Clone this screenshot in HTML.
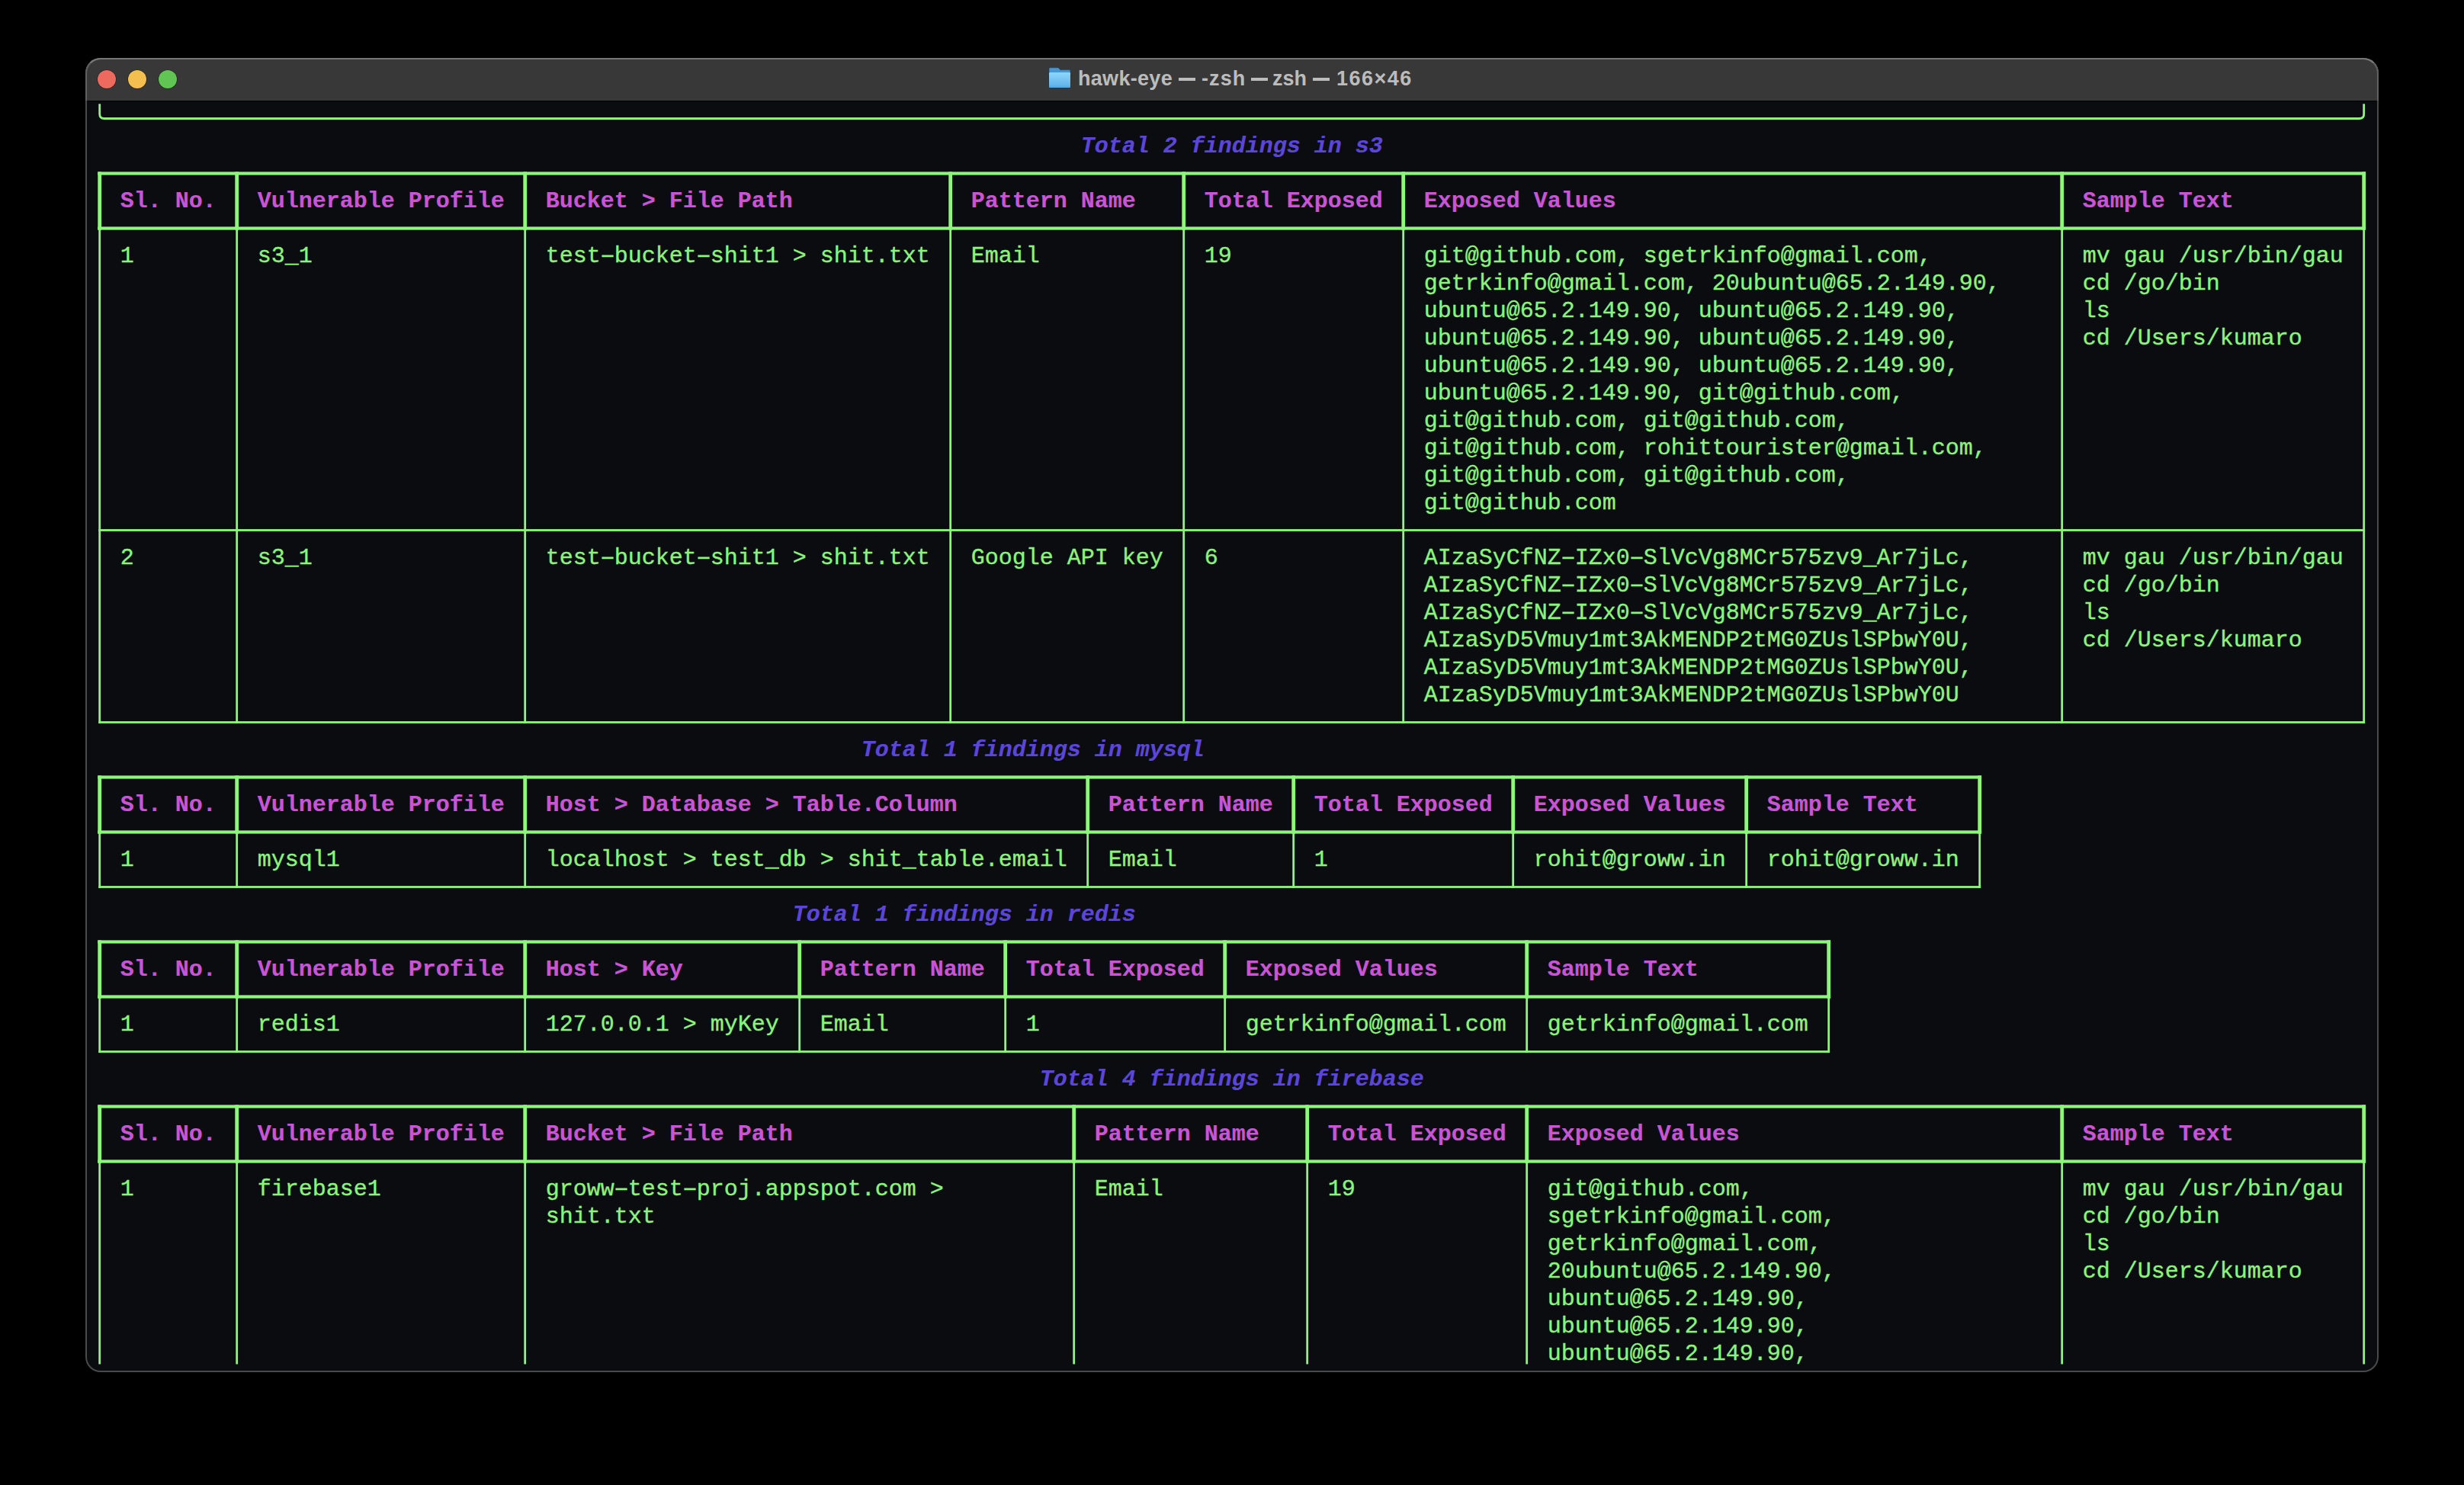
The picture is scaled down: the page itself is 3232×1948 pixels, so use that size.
<!DOCTYPE html>
<html><head><meta charset="utf-8"><style>
html,body{margin:0;padding:0;background:#000;width:3232px;height:1948px;overflow:hidden}
#win{position:absolute;left:112px;top:76px;width:3008px;height:1724px;border-radius:20px;background:#0b0c0f;overflow:hidden;box-sizing:border-box}
#frame{position:absolute;left:112px;top:76px;width:3008px;height:1724px;border-radius:20px;box-sizing:border-box;border:2px solid #4a4a4b;border-top-color:#777;pointer-events:none}
#frame2{position:absolute;left:112px;top:76px;width:3008px;height:56px;border-radius:20px 20px 0 0;box-sizing:border-box;border:2px solid #606060;border-top-color:#777;border-bottom:none;pointer-events:none}
#bar{position:absolute;left:0;top:0;width:100%;height:57px;background:#383838;border-bottom:1px solid #000;box-sizing:border-box}
.dot{position:absolute;top:16px;width:24px;height:24px;border-radius:50%;box-shadow:0 0 0 0.6px rgba(0,0,0,0.45)}
.dash{position:absolute;top:26.299999999999997px;width:22.4px;height:3.4px;background:#bcbcbc}
.ttl{position:absolute;top:-1.5px;height:56px;line-height:56px;font-family:"Liberation Sans",sans-serif;font-weight:bold;font-size:27px;color:#bcbcbc;white-space:pre}
.t{position:absolute;white-space:pre;font-family:"Liberation Mono",monospace;font-size:30px;letter-spacing:-0.0029px;line-height:36.0px;height:36.0px}
.g{color:#8cf47c;-webkit-text-stroke:0.35px #8cf47c}
.h{color:#c955d6;font-weight:bold;-webkit-text-stroke:0.2px #c955d6}
.b{color:#5b46d9;font-weight:bold;font-style:italic;-webkit-text-stroke:0.2px #5b46d9}
svg{position:absolute;left:0;top:0}
.hy{display:inline-block;transform:scaleX(1.75)}
</style></head><body>
<div id="win">
 <div id="bar">
  <div class="dot" style="left:16px;background:#ed6a5e"></div>
  <div class="dot" style="left:56px;background:#f4bf4f"></div>
  <div class="dot" style="left:96px;background:#61c554"></div>
  <svg style="position:absolute;left:1262px;top:11px" width="32" height="30" viewBox="0 0 32 30">
   <defs><linearGradient id="fg" x1="0" y1="0" x2="0" y2="1"><stop offset="0" stop-color="#8ed6fd"/><stop offset="1" stop-color="#5eb1e8"/></linearGradient></defs>
   <path d="M2,3.2 Q2,1.8 3.4,1.8 L13.4,1.8 Q14.4,1.8 15.1,2.6 L16.6,4.6 L28.6,4.6 Q30,4.6 30,6 L30,26.6 Q30,28 28.6,28 L3.4,28 Q2,28 2,26.6 Z" fill="#4596d2" stroke="#173048" stroke-width="0.8" stroke-opacity="0.6"/>
   <rect x="2" y="8" width="28" height="20" rx="1.2" fill="url(#fg)"/>
   <rect x="2" y="25.6" width="28" height="1.6" fill="#55a6df" opacity="0.7"/>
  </svg>
  <div class="ttl" style="left:1302px;letter-spacing:0.3px">hawk-eye</div>
  <div class="dash" style="left:1434px"></div>
  <div class="ttl" style="left:1464px;letter-spacing:1.1px">-zsh</div>
  <div class="dash" style="left:1528.5px"></div>
  <div class="ttl" style="left:1557px">zsh</div>
  <div class="dash" style="left:1610px"></div>
  <div class="ttl" style="left:1641px;letter-spacing:1.46px">166×46</div>
 </div>
</div>
<svg width="3232" height="1948" fill="#8cf77a" style="clip-path:inset(132px 0 0 0)">
<path d="M130.70,136.2 L130.70,149.50 Q130.70,155.50 136.70,155.50 L3094.70,155.50 Q3100.70,155.50 3100.70,149.50 L3100.70,136.2" fill="none" stroke="#8cf77a" stroke-width="2.8"/>
<rect x="128.30" y="225.40" width="2974.80" height="4.2"/>
<rect x="128.30" y="297.40" width="2974.80" height="4.2"/>
<rect x="128.30" y="225.40" width="4.8" height="76.20"/>
<rect x="308.30" y="225.40" width="4.8" height="76.20"/>
<rect x="686.30" y="225.40" width="4.8" height="76.20"/>
<rect x="1244.30" y="225.40" width="4.8" height="76.20"/>
<rect x="1550.30" y="225.40" width="4.8" height="76.20"/>
<rect x="1838.30" y="225.40" width="4.8" height="76.20"/>
<rect x="2702.30" y="225.40" width="4.8" height="76.20"/>
<rect x="3098.30" y="225.40" width="4.8" height="76.20"/>
<rect x="129.30" y="694.10" width="2972.80" height="2.8"/>
<rect x="129.30" y="946.10" width="2972.80" height="2.8"/>
<rect x="129.30" y="299.50" width="2.8" height="649.40"/>
<rect x="309.30" y="299.50" width="2.8" height="649.40"/>
<rect x="687.30" y="299.50" width="2.8" height="649.40"/>
<rect x="1245.30" y="299.50" width="2.8" height="649.40"/>
<rect x="1551.30" y="299.50" width="2.8" height="649.40"/>
<rect x="1839.30" y="299.50" width="2.8" height="649.40"/>
<rect x="2703.30" y="299.50" width="2.8" height="649.40"/>
<rect x="3099.30" y="299.50" width="2.8" height="649.40"/>
<rect x="128.30" y="1017.40" width="2470.80" height="4.2"/>
<rect x="128.30" y="1089.40" width="2470.80" height="4.2"/>
<rect x="128.30" y="1017.40" width="4.8" height="76.20"/>
<rect x="308.30" y="1017.40" width="4.8" height="76.20"/>
<rect x="686.30" y="1017.40" width="4.8" height="76.20"/>
<rect x="1424.30" y="1017.40" width="4.8" height="76.20"/>
<rect x="1694.30" y="1017.40" width="4.8" height="76.20"/>
<rect x="1982.30" y="1017.40" width="4.8" height="76.20"/>
<rect x="2288.30" y="1017.40" width="4.8" height="76.20"/>
<rect x="2594.30" y="1017.40" width="4.8" height="76.20"/>
<rect x="129.30" y="1162.10" width="2468.80" height="2.8"/>
<rect x="129.30" y="1091.50" width="2.8" height="73.40"/>
<rect x="309.30" y="1091.50" width="2.8" height="73.40"/>
<rect x="687.30" y="1091.50" width="2.8" height="73.40"/>
<rect x="1425.30" y="1091.50" width="2.8" height="73.40"/>
<rect x="1695.30" y="1091.50" width="2.8" height="73.40"/>
<rect x="1983.30" y="1091.50" width="2.8" height="73.40"/>
<rect x="2289.30" y="1091.50" width="2.8" height="73.40"/>
<rect x="2595.30" y="1091.50" width="2.8" height="73.40"/>
<rect x="128.30" y="1233.40" width="2272.80" height="4.2"/>
<rect x="128.30" y="1305.40" width="2272.80" height="4.2"/>
<rect x="128.30" y="1233.40" width="4.8" height="76.20"/>
<rect x="308.30" y="1233.40" width="4.8" height="76.20"/>
<rect x="686.30" y="1233.40" width="4.8" height="76.20"/>
<rect x="1046.30" y="1233.40" width="4.8" height="76.20"/>
<rect x="1316.30" y="1233.40" width="4.8" height="76.20"/>
<rect x="1604.30" y="1233.40" width="4.8" height="76.20"/>
<rect x="2000.30" y="1233.40" width="4.8" height="76.20"/>
<rect x="2396.30" y="1233.40" width="4.8" height="76.20"/>
<rect x="129.30" y="1378.10" width="2270.80" height="2.8"/>
<rect x="129.30" y="1307.50" width="2.8" height="73.40"/>
<rect x="309.30" y="1307.50" width="2.8" height="73.40"/>
<rect x="687.30" y="1307.50" width="2.8" height="73.40"/>
<rect x="1047.30" y="1307.50" width="2.8" height="73.40"/>
<rect x="1317.30" y="1307.50" width="2.8" height="73.40"/>
<rect x="1605.30" y="1307.50" width="2.8" height="73.40"/>
<rect x="2001.30" y="1307.50" width="2.8" height="73.40"/>
<rect x="2397.30" y="1307.50" width="2.8" height="73.40"/>
<rect x="128.30" y="1449.40" width="2974.80" height="4.2"/>
<rect x="128.30" y="1521.40" width="2974.80" height="4.2"/>
<rect x="128.30" y="1449.40" width="4.8" height="76.20"/>
<rect x="308.30" y="1449.40" width="4.8" height="76.20"/>
<rect x="686.30" y="1449.40" width="4.8" height="76.20"/>
<rect x="1406.30" y="1449.40" width="4.8" height="76.20"/>
<rect x="1712.30" y="1449.40" width="4.8" height="76.20"/>
<rect x="2000.30" y="1449.40" width="4.8" height="76.20"/>
<rect x="2702.30" y="1449.40" width="4.8" height="76.20"/>
<rect x="3098.30" y="1449.40" width="4.8" height="76.20"/>
<rect x="129.30" y="1523.50" width="2.8" height="266.00"/>
<rect x="309.30" y="1523.50" width="2.8" height="266.00"/>
<rect x="687.30" y="1523.50" width="2.8" height="266.00"/>
<rect x="1407.30" y="1523.50" width="2.8" height="266.00"/>
<rect x="1713.30" y="1523.50" width="2.8" height="266.00"/>
<rect x="2001.30" y="1523.50" width="2.8" height="266.00"/>
<rect x="2703.30" y="1523.50" width="2.8" height="266.00"/>
<rect x="3099.30" y="1523.50" width="2.8" height="266.00"/>
</svg>
<div class="t b" style="left:1417.70px;top:173.50px">Total 2 findings in s3</div>
<div class="t h" style="left:157.70px;top:245.50px">Sl. No.</div>
<div class="t h" style="left:337.70px;top:245.50px">Vulnerable Profile</div>
<div class="t h" style="left:715.70px;top:245.50px">Bucket &gt; File Path</div>
<div class="t h" style="left:1273.70px;top:245.50px">Pattern Name</div>
<div class="t h" style="left:1579.70px;top:245.50px">Total Exposed</div>
<div class="t h" style="left:1867.70px;top:245.50px">Exposed Values</div>
<div class="t h" style="left:2731.70px;top:245.50px">Sample Text</div>
<div class="t g" style="left:157.70px;top:317.50px">1</div>
<div class="t g" style="left:337.70px;top:317.50px">s3_1</div>
<div class="t g" style="left:715.70px;top:317.50px">test<span class=hy>-</span>bucket<span class=hy>-</span>shit1 &gt; shit.txt</div>
<div class="t g" style="left:1273.70px;top:317.50px">Email</div>
<div class="t g" style="left:1579.70px;top:317.50px">19</div>
<div class="t g" style="left:1867.70px;top:317.50px">git@github.com, sgetrkinfo@gmail.com,</div>
<div class="t g" style="left:1867.70px;top:353.50px">getrkinfo@gmail.com, 20ubuntu@65.2.149.90,</div>
<div class="t g" style="left:1867.70px;top:389.50px">ubuntu@65.2.149.90, ubuntu@65.2.149.90,</div>
<div class="t g" style="left:1867.70px;top:425.50px">ubuntu@65.2.149.90, ubuntu@65.2.149.90,</div>
<div class="t g" style="left:1867.70px;top:461.50px">ubuntu@65.2.149.90, ubuntu@65.2.149.90,</div>
<div class="t g" style="left:1867.70px;top:497.50px">ubuntu@65.2.149.90, git@github.com,</div>
<div class="t g" style="left:1867.70px;top:533.50px">git@github.com, git@github.com,</div>
<div class="t g" style="left:1867.70px;top:569.50px">git@github.com, rohittourister@gmail.com,</div>
<div class="t g" style="left:1867.70px;top:605.50px">git@github.com, git@github.com,</div>
<div class="t g" style="left:1867.70px;top:641.50px">git@github.com</div>
<div class="t g" style="left:2731.70px;top:317.50px">mv gau /usr/bin/gau</div>
<div class="t g" style="left:2731.70px;top:353.50px">cd /go/bin</div>
<div class="t g" style="left:2731.70px;top:389.50px">ls</div>
<div class="t g" style="left:2731.70px;top:425.50px">cd /Users/kumaro</div>
<div class="t g" style="left:157.70px;top:713.50px">2</div>
<div class="t g" style="left:337.70px;top:713.50px">s3_1</div>
<div class="t g" style="left:715.70px;top:713.50px">test<span class=hy>-</span>bucket<span class=hy>-</span>shit1 &gt; shit.txt</div>
<div class="t g" style="left:1273.70px;top:713.50px">Google API key</div>
<div class="t g" style="left:1579.70px;top:713.50px">6</div>
<div class="t g" style="left:1867.70px;top:713.50px">AIzaSyCfNZ<span class=hy>-</span>IZx0<span class=hy>-</span>SlVcVg8MCr575zv9_Ar7jLc,</div>
<div class="t g" style="left:1867.70px;top:749.50px">AIzaSyCfNZ<span class=hy>-</span>IZx0<span class=hy>-</span>SlVcVg8MCr575zv9_Ar7jLc,</div>
<div class="t g" style="left:1867.70px;top:785.50px">AIzaSyCfNZ<span class=hy>-</span>IZx0<span class=hy>-</span>SlVcVg8MCr575zv9_Ar7jLc,</div>
<div class="t g" style="left:1867.70px;top:821.50px">AIzaSyD5Vmuy1mt3AkMENDP2tMG0ZUslSPbwY0U,</div>
<div class="t g" style="left:1867.70px;top:857.50px">AIzaSyD5Vmuy1mt3AkMENDP2tMG0ZUslSPbwY0U,</div>
<div class="t g" style="left:1867.70px;top:893.50px">AIzaSyD5Vmuy1mt3AkMENDP2tMG0ZUslSPbwY0U</div>
<div class="t g" style="left:2731.70px;top:713.50px">mv gau /usr/bin/gau</div>
<div class="t g" style="left:2731.70px;top:749.50px">cd /go/bin</div>
<div class="t g" style="left:2731.70px;top:785.50px">ls</div>
<div class="t g" style="left:2731.70px;top:821.50px">cd /Users/kumaro</div>
<div class="t b" style="left:1129.70px;top:965.50px">Total 1 findings in mysql</div>
<div class="t h" style="left:157.70px;top:1037.50px">Sl. No.</div>
<div class="t h" style="left:337.70px;top:1037.50px">Vulnerable Profile</div>
<div class="t h" style="left:715.70px;top:1037.50px">Host &gt; Database &gt; Table.Column</div>
<div class="t h" style="left:1453.70px;top:1037.50px">Pattern Name</div>
<div class="t h" style="left:1723.70px;top:1037.50px">Total Exposed</div>
<div class="t h" style="left:2011.70px;top:1037.50px">Exposed Values</div>
<div class="t h" style="left:2317.70px;top:1037.50px">Sample Text</div>
<div class="t g" style="left:157.70px;top:1109.50px">1</div>
<div class="t g" style="left:337.70px;top:1109.50px">mysql1</div>
<div class="t g" style="left:715.70px;top:1109.50px">localhost &gt; test_db &gt; shit_table.email</div>
<div class="t g" style="left:1453.70px;top:1109.50px">Email</div>
<div class="t g" style="left:1723.70px;top:1109.50px">1</div>
<div class="t g" style="left:2011.70px;top:1109.50px">rohit@groww.in</div>
<div class="t g" style="left:2317.70px;top:1109.50px">rohit@groww.in</div>
<div class="t b" style="left:1039.70px;top:1181.50px">Total 1 findings in redis</div>
<div class="t h" style="left:157.70px;top:1253.50px">Sl. No.</div>
<div class="t h" style="left:337.70px;top:1253.50px">Vulnerable Profile</div>
<div class="t h" style="left:715.70px;top:1253.50px">Host &gt; Key</div>
<div class="t h" style="left:1075.70px;top:1253.50px">Pattern Name</div>
<div class="t h" style="left:1345.70px;top:1253.50px">Total Exposed</div>
<div class="t h" style="left:1633.70px;top:1253.50px">Exposed Values</div>
<div class="t h" style="left:2029.70px;top:1253.50px">Sample Text</div>
<div class="t g" style="left:157.70px;top:1325.50px">1</div>
<div class="t g" style="left:337.70px;top:1325.50px">redis1</div>
<div class="t g" style="left:715.70px;top:1325.50px">127.0.0.1 &gt; myKey</div>
<div class="t g" style="left:1075.70px;top:1325.50px">Email</div>
<div class="t g" style="left:1345.70px;top:1325.50px">1</div>
<div class="t g" style="left:1633.70px;top:1325.50px">getrkinfo@gmail.com</div>
<div class="t g" style="left:2029.70px;top:1325.50px">getrkinfo@gmail.com</div>
<div class="t b" style="left:1363.70px;top:1397.50px">Total 4 findings in firebase</div>
<div class="t h" style="left:157.70px;top:1469.50px">Sl. No.</div>
<div class="t h" style="left:337.70px;top:1469.50px">Vulnerable Profile</div>
<div class="t h" style="left:715.70px;top:1469.50px">Bucket &gt; File Path</div>
<div class="t h" style="left:1435.70px;top:1469.50px">Pattern Name</div>
<div class="t h" style="left:1741.70px;top:1469.50px">Total Exposed</div>
<div class="t h" style="left:2029.70px;top:1469.50px">Exposed Values</div>
<div class="t h" style="left:2731.70px;top:1469.50px">Sample Text</div>
<div class="t g" style="left:157.70px;top:1541.50px">1</div>
<div class="t g" style="left:337.70px;top:1541.50px">firebase1</div>
<div class="t g" style="left:715.70px;top:1541.50px">groww<span class=hy>-</span>test<span class=hy>-</span>proj.appspot.com &gt;</div>
<div class="t g" style="left:715.70px;top:1577.50px">shit.txt</div>
<div class="t g" style="left:1435.70px;top:1541.50px">Email</div>
<div class="t g" style="left:1741.70px;top:1541.50px">19</div>
<div class="t g" style="left:2029.70px;top:1541.50px">git@github.com,</div>
<div class="t g" style="left:2029.70px;top:1577.50px">sgetrkinfo@gmail.com,</div>
<div class="t g" style="left:2029.70px;top:1613.50px">getrkinfo@gmail.com,</div>
<div class="t g" style="left:2029.70px;top:1649.50px">20ubuntu@65.2.149.90,</div>
<div class="t g" style="left:2029.70px;top:1685.50px">ubuntu@65.2.149.90,</div>
<div class="t g" style="left:2029.70px;top:1721.50px">ubuntu@65.2.149.90,</div>
<div class="t g" style="left:2029.70px;top:1757.50px">ubuntu@65.2.149.90,</div>
<div class="t g" style="left:2731.70px;top:1541.50px">mv gau /usr/bin/gau</div>
<div class="t g" style="left:2731.70px;top:1577.50px">cd /go/bin</div>
<div class="t g" style="left:2731.70px;top:1613.50px">ls</div>
<div class="t g" style="left:2731.70px;top:1649.50px">cd /Users/kumaro</div>
<div id="frame"></div>
<div id="frame2"></div>
</body></html>
